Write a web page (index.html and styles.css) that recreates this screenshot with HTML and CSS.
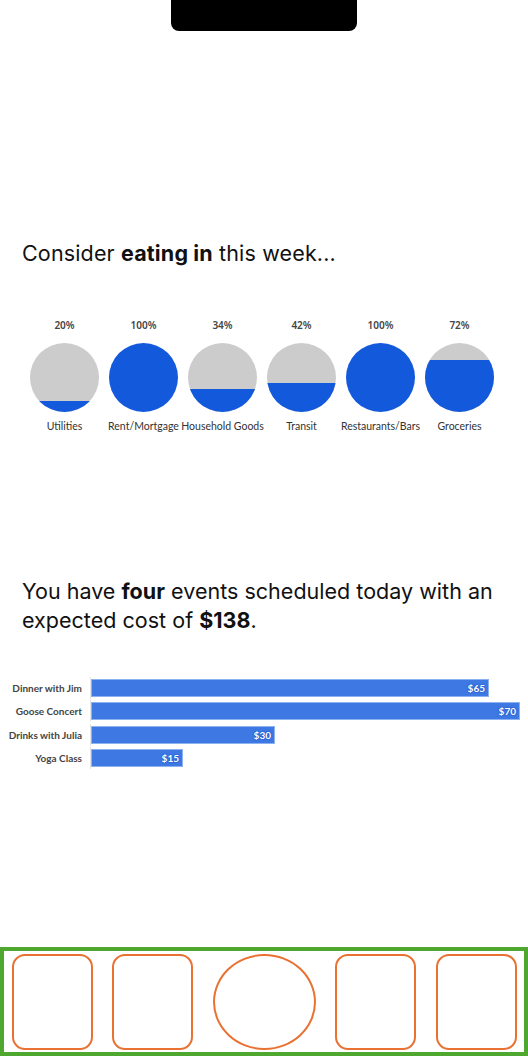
FILE: index.html
```html
<!DOCTYPE html>
<html lang="en">
<head>
  <meta charset="UTF-8">
  <title>Weekly Spending</title>
  <link rel="stylesheet" href="styles.css">
</head>
<body>

<div class="screen">
  <div class="notch"></div>

  <p class="headline">Consider <strong>eating in</strong> this week...</p>

  <!-- budget used per category -->
  <div class="budget">
    <div class="cat">
      <span class="pct">20%</span>
      <div class="ball"><div class="fill" style="height: 16%"></div></div>
      <span class="name">Utilities</span>
    </div>
    <div class="cat">
      <span class="pct">100%</span>
      <div class="ball"><div class="fill" style="height: 100%"></div></div>
      <span class="name">Rent/Mortgage</span>
    </div>
    <div class="cat">
      <span class="pct">34%</span>
      <div class="ball"><div class="fill" style="height: 33%"></div></div>
      <span class="name">Household Goods</span>
    </div>
    <div class="cat">
      <span class="pct">42%</span>
      <div class="ball"><div class="fill" style="height: 41.5%"></div></div>
      <span class="name">Transit</span>
    </div>
    <div class="cat">
      <span class="pct">100%</span>
      <div class="ball"><div class="fill" style="height: 100%"></div></div>
      <span class="name">Restaurants/Bars</span>
    </div>
    <div class="cat">
      <span class="pct">72%</span>
      <div class="ball"><div class="fill" style="height: 75.5%"></div></div>
      <span class="name">Groceries</span>
    </div>
  </div>

  <p class="summary">You have <strong>four</strong> events scheduled today with an<br>expected cost of <strong>$138</strong>.</p>

  <!-- today's events -->
  <div class="events">
    <span class="ev-name">Dinner with Jim</span>
    <div class="ev-track"><div class="bar" style="width: 398px">$65</div></div>
    <span class="ev-name">Goose Concert</span>
    <div class="ev-track"><div class="bar" style="width: 429px">$70</div></div>
    <span class="ev-name">Drinks with Julia</span>
    <div class="ev-track"><div class="bar" style="width: 184px">$30</div></div>
    <span class="ev-name">Yoga Class</span>
    <div class="ev-track"><div class="bar" style="width: 92px">$15</div></div>
  </div>

  <nav class="tabbar">
    <div class="tab"></div>
    <div class="tab"></div>
    <div class="tab tab-main"></div>
    <div class="tab"></div>
    <div class="tab"></div>
  </nav>
</div>

</body>
</html>
```

FILE: styles.css
```css
body {
  margin: 0;
  background: #fff;
  font-family: Inter, "Liberation Sans", sans-serif;
  color: #111;
}
.screen {
  width: 528px;
  height: 1056px;
  display: flex;
  flex-direction: column;
}
.notch {
  width: 186px;
  height: 31px;
  margin: 0 auto;
  background: #000;
  border-radius: 0 0 8px 8px;
}
.headline {
  margin: 210px 0 0;
  padding-left: 22px;
  font-size: 21.5px;
  line-height: 24px;
  letter-spacing: 0.15px;
}
.headline strong,
.summary strong {
  font-weight: 700;
}
.budget {
  display: grid;
  grid-template-columns: repeat(6, 79px);
  margin: 53px 0 0 25px;
  font-family: "Noto Sans", sans-serif;
}
.cat {
  display: flex;
  flex-direction: column;
  align-items: center;
}
.pct {
  font-size: 10px;
  line-height: 14px;
  font-weight: 600;
  color: #444;
}
.ball {
  width: 69px;
  height: 69px;
  margin-top: 11px;
  border-radius: 50%;
  background: #cccccc;
  overflow: hidden;
  display: flex;
  align-items: flex-end;
}
.fill {
  width: 100%;
  background: #1259dc;
}
.name {
  margin-top: 7px;
  font-family: Lato, "Noto Sans", sans-serif;
  font-size: 10.5px;
  line-height: 14px;
  color: #333;
  white-space: nowrap;
}
.summary {
  margin: 144px 0 0;
  padding-left: 22px;
  font-size: 21.5px;
  line-height: 29px;
  letter-spacing: 0.02px;
}
.events {
  display: grid;
  grid-template-columns: 90px 1fr;
  grid-auto-rows: 18px;
  row-gap: 5.3px;
  margin-top: 44px;
  font-family: Lato, "Noto Sans", sans-serif;
  font-size: 10px;
  font-weight: 700;
}
.ev-name {
  padding-right: 8px;
  text-align: right;
  line-height: 18px;
  color: #444;
  white-space: nowrap;
}
.ev-track {
  border-left: 1px solid #e4e4e4;
  margin: -2px 0;
  padding: 2px 0;
}
.bar {
  box-sizing: border-box;
  height: 18px;
  padding-right: 3px;
  background: #3d78e3;
  border: 1px solid #8db2f1;
  color: #fff;
  text-align: right;
  line-height: 16px;
  text-shadow: 0 0 2px #1d4fc4, 0 0 1px #1d4fc4;
}
.tabbar {
  margin-top: auto;
  height: 109px;
  box-sizing: border-box;
  border: 4px solid #4ea72e;
  display: flex;
  align-items: center;
  justify-content: center;
  gap: 19.5px;
}
.tab {
  box-sizing: border-box;
  width: 81px;
  height: 96px;
  border: 2.5px solid #e97132;
  border-radius: 13px;
}
.tab-main {
  width: 103px;
  border-radius: 50%;
}
```
